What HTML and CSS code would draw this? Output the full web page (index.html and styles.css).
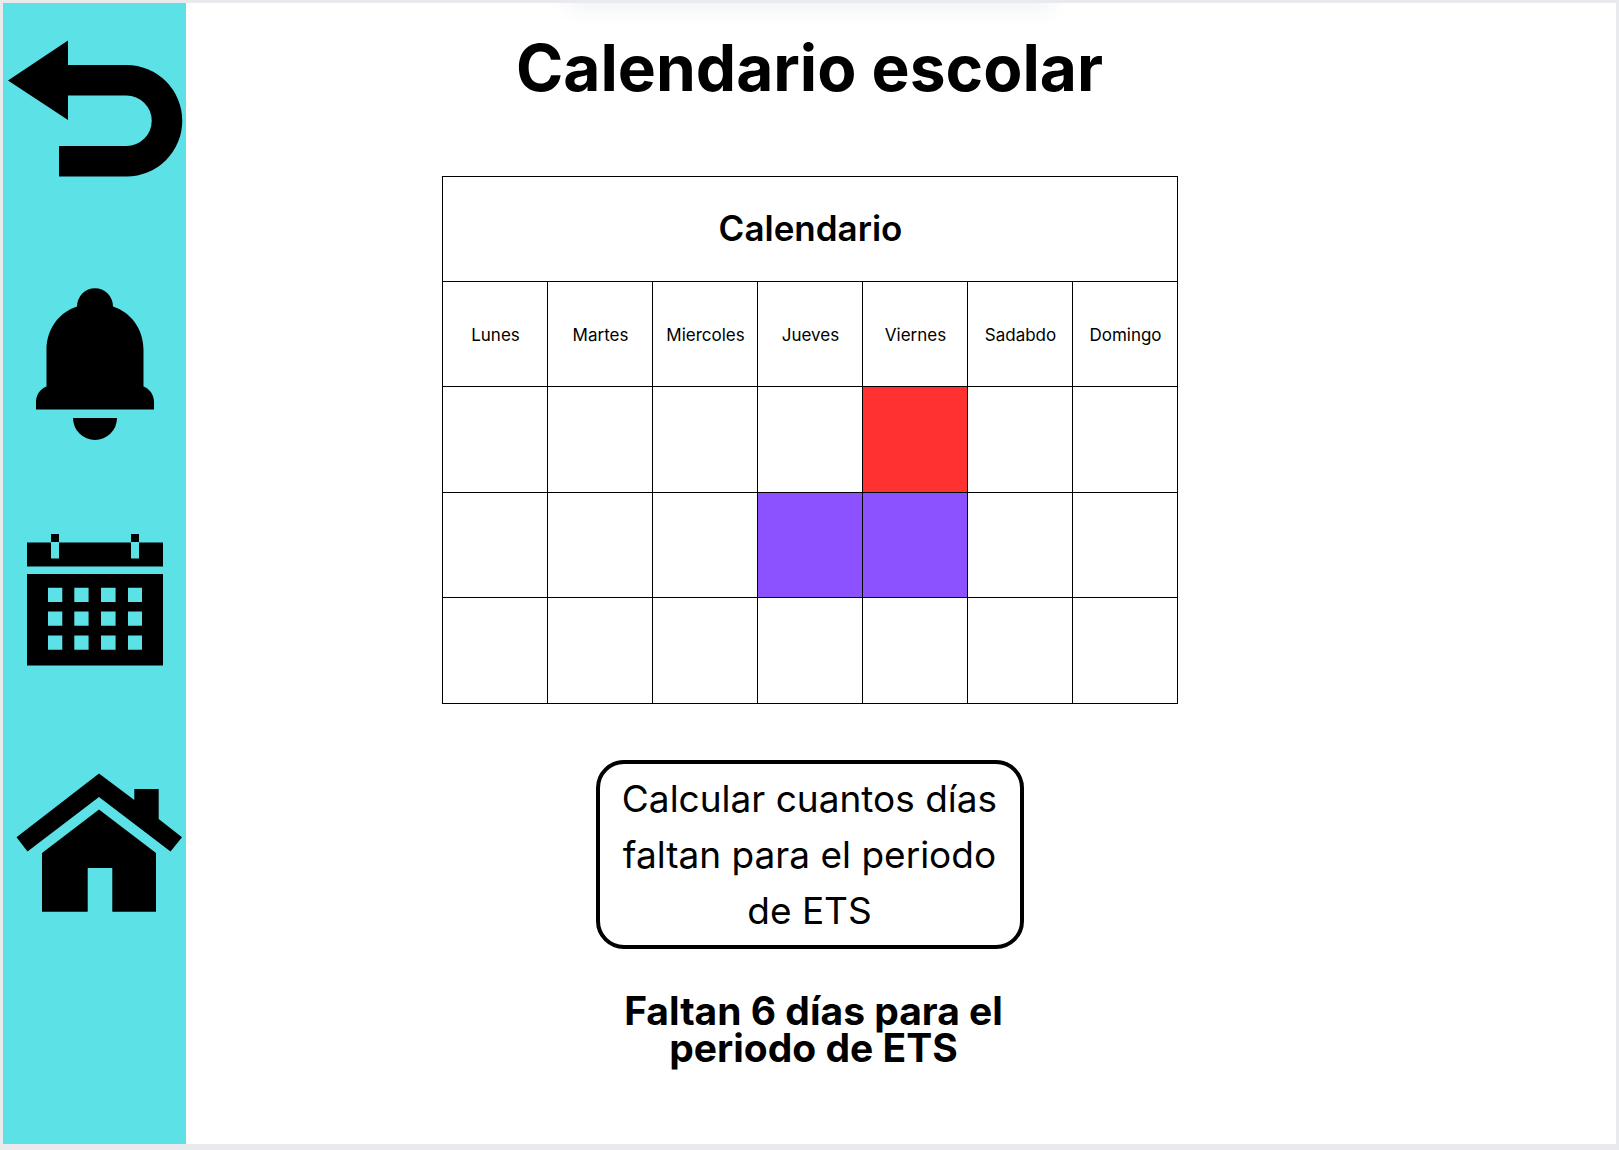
FILE: index.html
```html
<!DOCTYPE html>
<html lang="es">
<head>
<meta charset="utf-8">
<meta name="viewport" content="width=device-width, initial-scale=1">
<title>Calendario escolar</title>
<link rel="stylesheet" href="styles.css">
</head>
<body>
<div class="page">
  <nav class="sidebar" aria-label="Principal">
    <a class="nav-link nav-back" href="#volver" aria-label="Volver">
      <svg viewBox="3 40 183 137" aria-hidden="true"><path d="M8 80.500 68 40.500V65H126.500A55.500 55.500 0 0 1 126.500 176.500H59V146H126.500A25.200 25.200 0 0 0 126.500 95.500H68V120Z"/></svg>
    </a>
    <a class="nav-link nav-bell" href="#avisos" aria-label="Avisos">
      <svg viewBox="3 288 183 152" aria-hidden="true"><path d="M77 306.500A18 18.300 0 0 1 113 306.500C130 312 143.500 328 143.500 350V386.500C150 389 154 395 154 402V409.500H36V402C36 395 40 389 46.500 386.500V350C46.500 328 60 312 77 306.500ZM73 418H117A22 22 0 0 1 73 418Z"/></svg>
    </a>
    <a class="nav-link nav-calendar" href="#calendario" aria-label="Calendario">
      <svg viewBox="3 534 183 132" aria-hidden="true"><path fill-rule="evenodd" d="M51 534h8v8h-8ZM131 534h8v8h-8ZM27 542.500H51V558.500H59V542.500H131V558.500H139V542.500H163V566.500H27ZM27 574H163V665.500H27ZM48 587.700h14.300v14.300h-14.300ZM74.300 587.700h14.300v14.300h-14.300ZM101 587.700h14.600v14.300h-14.600ZM128 587.700h14v14.300h-14ZM48 611.500h14.300v14.300h-14.300ZM74.300 611.500h14.300v14.300h-14.300ZM101 611.500h14.600v14.300h-14.600ZM128 611.500h14v14.300h-14ZM48 635.500h14.300v14.300h-14.300ZM74.300 635.500h14.300v14.300h-14.300ZM101 635.500h14.600v14.300h-14.600ZM128 635.500h14v14.300h-14Z"/></svg>
    </a>
    <a class="nav-link nav-home" href="#inicio" aria-label="Inicio">
      <svg viewBox="3 773 183 139" aria-hidden="true"><path d="M16.500 837.300 99 773.500 134.300 800V789H158.700V819L182 837.300 170.500 851.500 99 797 27.500 851.500ZM42 853 99 809.500 156 853V911.800H112.300V868H87.700V911.800H42Z"/></svg>
    </a>
  </nav>
  <main class="content">
    <h1 class="title">Calendario escolar</h1>
    <table class="calendar">
      <thead>
        <tr><th class="calendar-title" colspan="7" scope="colgroup">Calendario</th></tr>
        <tr>
          <th scope="col">Lunes</th><th scope="col">Martes</th><th scope="col">Miercoles</th><th scope="col">Jueves</th><th scope="col">Viernes</th><th scope="col">Sadabdo</th><th scope="col">Domingo</th>
        </tr>
      </thead>
      <tbody>
        <tr><td></td><td></td><td></td><td></td><td class="day-today"></td><td></td><td></td></tr>
        <tr><td></td><td></td><td></td><td class="day-ets"></td><td class="day-ets"></td><td></td><td></td></tr>
        <tr><td></td><td></td><td></td><td></td><td></td><td></td><td></td></tr>
      </tbody>
    </table>
    <button class="calculate" type="button">Calcular cuantos días<br>faltan para el periodo<br>de ETS</button>
    <p class="result">Faltan 6 días para el<br>periodo de ETS</p>
  </main>
</div>
</body>
</html>
```
FILE: styles.css
```css
* {
  box-sizing: border-box;
}

body {
  margin: 0;
  background: #e6e8ed;
  color: #000;
  font-family: Inter, "Liberation Sans", sans-serif;
}

.page {
  position: relative;
  display: flex;
  min-height: 100vh;
  border: solid #e8eaee;
  border-width: 3px 3px 6px;
  background: #fff;
  overflow: hidden;
}

/* Soft shadow that falls from the top edge */
.page::before {
  content: "";
  position: absolute;
  top: -20px;
  left: 50%;
  width: 480px;
  height: 20px;
  transform: translateX(-50%);
  box-shadow: 0 2px 24px rgba(40, 60, 90, 0.1);
}

.sidebar {
  display: flex;
  flex: 0 0 183px;
  flex-direction: column;
  padding-top: 37px;
  background: #5ce1e6;
}

.nav-link {
  display: block;
  color: #000;
}

.nav-link svg {
  display: block;
  width: 100%;
  fill: currentColor;
}

.nav-bell {
  margin-top: 111px;
}

.nav-calendar {
  margin-top: 94px;
}

.nav-home {
  margin-top: 107px;
}

.content {
  display: flex;
  flex: 1;
  flex-direction: column;
  align-items: center;
  padding: 33px 183px 72px 0;
}

.title {
  margin: 0;
  font-size: 64px;
  font-weight: 700;
  line-height: 64px;
}

.calendar {
  width: 100%;
  max-width: 736px;
  height: 528px;
  margin-top: 76px;
  border-collapse: collapse;
  table-layout: fixed;
}

.calendar tr {
  height: 105px;
}

.calendar th,
.calendar td {
  padding: 2px 0 0 2px;
  border: 1px solid #000;
  font-size: 17px;
  font-weight: 400;
  line-height: 24px;
  text-align: center;
}

.calendar .calendar-title {
  padding: 0 0 2px 2px;
  font-size: 35px;
  font-weight: 600;
  line-height: 40px;
}

.day-today {
  background: #ff3131;
}

.day-ets {
  background: #8c52ff;
}

.calculate {
  width: 100%;
  max-width: 428px;
  margin-top: 56px;
  padding: 7px 0 6px;
  border: 4px solid #000;
  border-radius: 28px;
  background: #fff;
  color: #000;
  font: 400 37px/56px Inter, "Liberation Sans", sans-serif;
  text-align: center;
}

.result {
  margin: 43px 0 0 8px;
  font-size: 39px;
  font-weight: 700;
  line-height: 37px;
  text-align: center;
}
```
